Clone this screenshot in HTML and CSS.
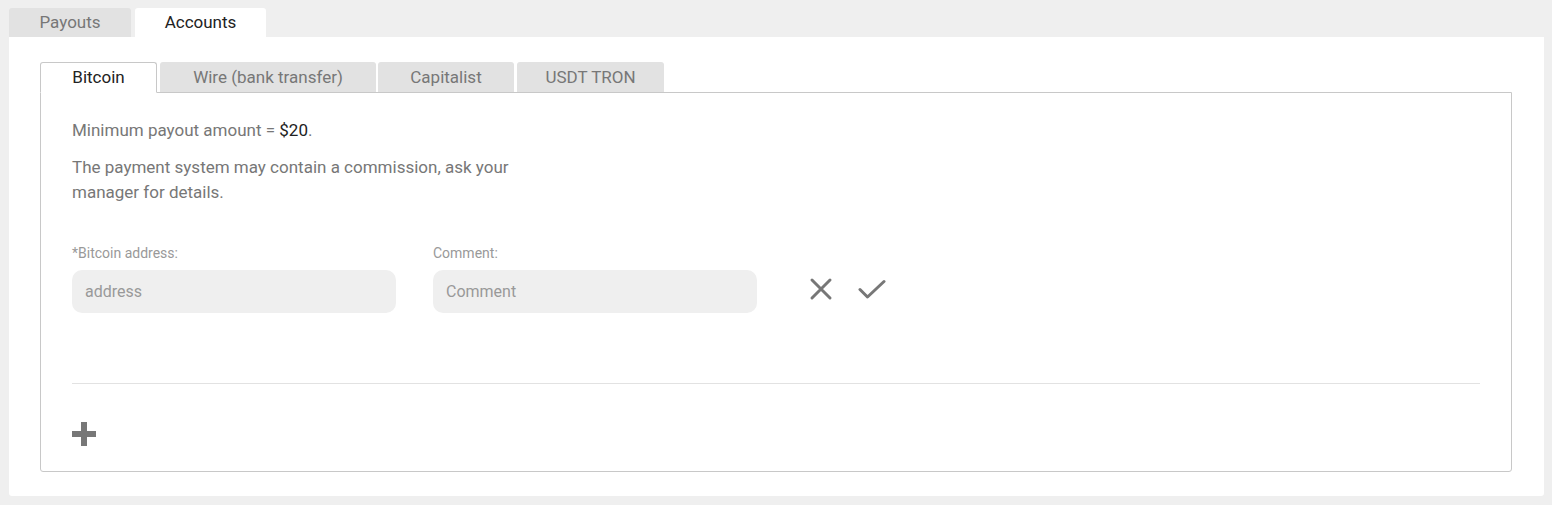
FILE: index.html
```html
<!DOCTYPE html>
<html lang="en">
<head>
<meta charset="utf-8">
<title>Accounts</title>
<link rel="stylesheet" href="styles.css">
</head>
<body>
<div class="page">
  <nav class="top-tabs">
    <div class="top-tab">Payouts</div>
    <div class="top-tab active">Accounts</div>
  </nav>
  <main class="panel">
    <nav class="sub-tabs">
      <div class="sub-tab active">Bitcoin</div>
      <div class="sub-tab">Wire (bank transfer)</div>
      <div class="sub-tab">Capitalist</div>
      <div class="sub-tab">USDT TRON</div>
    </nav>
    <section class="box">
      <p class="info">Minimum payout amount = <span class="strong">$20</span>.</p>
      <p class="info narrow">The payment system may contain a commission, ask your manager for details.</p>
      <form class="row">
        <label class="field">
          <span class="label">*Bitcoin address:</span>
          <input class="input" type="text" placeholder="address">
        </label>
        <label class="field">
          <span class="label">Comment:</span>
          <input class="input" type="text" placeholder="Comment">
        </label>
        <div class="actions">
          <svg class="icon" width="24" height="24" viewBox="0 0 24 24"><path d="M3 3 L21 21 M21 3 L3 21" stroke="#777" stroke-width="3" fill="none" stroke-linecap="round"/></svg>
          <svg class="icon check" width="28" height="20" viewBox="0 0 28 20"><path d="M2 10.5 L9.5 18 L26 2.5" stroke="#777" stroke-width="3" fill="none" stroke-linecap="round" stroke-linejoin="round"/></svg>
        </div>
      </form>
      <hr class="sep">
      <div class="add"><span class="plus"></span></div>
    </section>
  </main>
</div>
</body>
</html>
```

FILE: styles.css
```css
* { box-sizing: border-box; }
html, body { margin: 0; padding: 0; }
body {
  background: #efefef;
  font-family: Roboto, "Liberation Sans", Arial, sans-serif;
  color: #777;
}
.page {
  padding: 8px 8px 9px 9px;
}
.top-tabs {
  display: flex;
  gap: 4px;
  height: 29px;
}
.top-tab {
  background: #e2e2e2;
  color: #777;
  font-size: 17px;
  line-height: 29px;
  text-align: center;
  border-radius: 3px 3px 0 0;
  width: 122px;
}
.top-tab.active {
  background: #fff;
  color: #222;
  width: 131px;
}
.panel {
  background: #fff;
  padding: 25px 32px 25px 31px;
  border-radius: 0 0 3px 3px;
  height: 459px;
}
.sub-tabs {
  display: flex;
  gap: 3px;
  height: 30px;
  position: relative;
  z-index: 1;
}
.sub-tab {
  background: #e2e2e2;
  color: #777;
  font-size: 17px;
  line-height: 30px;
  text-align: center;
  border-radius: 3px 3px 0 0;
}
.sub-tab:nth-child(1) { width: 117px; }
.sub-tab:nth-child(2) { width: 216px; }
.sub-tab:nth-child(3) { width: 136px; margin-left: -1px; }
.sub-tab:nth-child(4) { width: 147px; }
.sub-tab.active {
  background: #fff;
  color: #222;
  border: 1px solid #c8c8c8;
  border-bottom: 1px solid #fff;
  line-height: 29px;
  height: 31px;
}
.box {
  border: 1px solid #c8c8c8;
  border-radius: 0 0 3px 3px;
  padding: 25px 31px 24px 31px;
  height: 380px;
}
.info {
  margin: 0 0 12px;
  font-size: 17px;
  line-height: 25px;
}
.narrow { width: 450px; }
.strong { color: #222; }
.row {
  display: flex;
  align-items: flex-end;
  gap: 37px;
  margin-top: 39px;
}
.field {
  display: flex;
  flex-direction: column;
  width: 324px;
}
.label {
  font-size: 14px;
  line-height: 18px;
  color: #999;
  margin-bottom: 8px;
}
.input {
  height: 43px;
  border: none;
  background: #efefef;
  border-radius: 10px;
  padding: 0 13px;
  font-family: inherit;
  font-size: 16px;
  color: #444;
  outline: none;
}
.input::placeholder { color: #999; }
.actions {
  display: flex;
  align-items: center;
  gap: 25px;
  height: 43px;
  padding-left: 15px;
  padding-bottom: 5px;
}
.sep {
  border: none;
  border-top: 1px solid #e2e2e2;
  margin: 70px 0 0;
}
.add {
  margin-top: 38px;
  height: 24px;
}
.plus {
  display: block;
  position: relative;
  width: 24px;
  height: 24px;
}
.plus::before, .plus::after {
  content: "";
  position: absolute;
  background: #777;
}
.plus::before { left: 0; top: 9px; width: 24px; height: 6px; }
.plus::after { left: 9px; top: 0; width: 6px; height: 24px; }
```
